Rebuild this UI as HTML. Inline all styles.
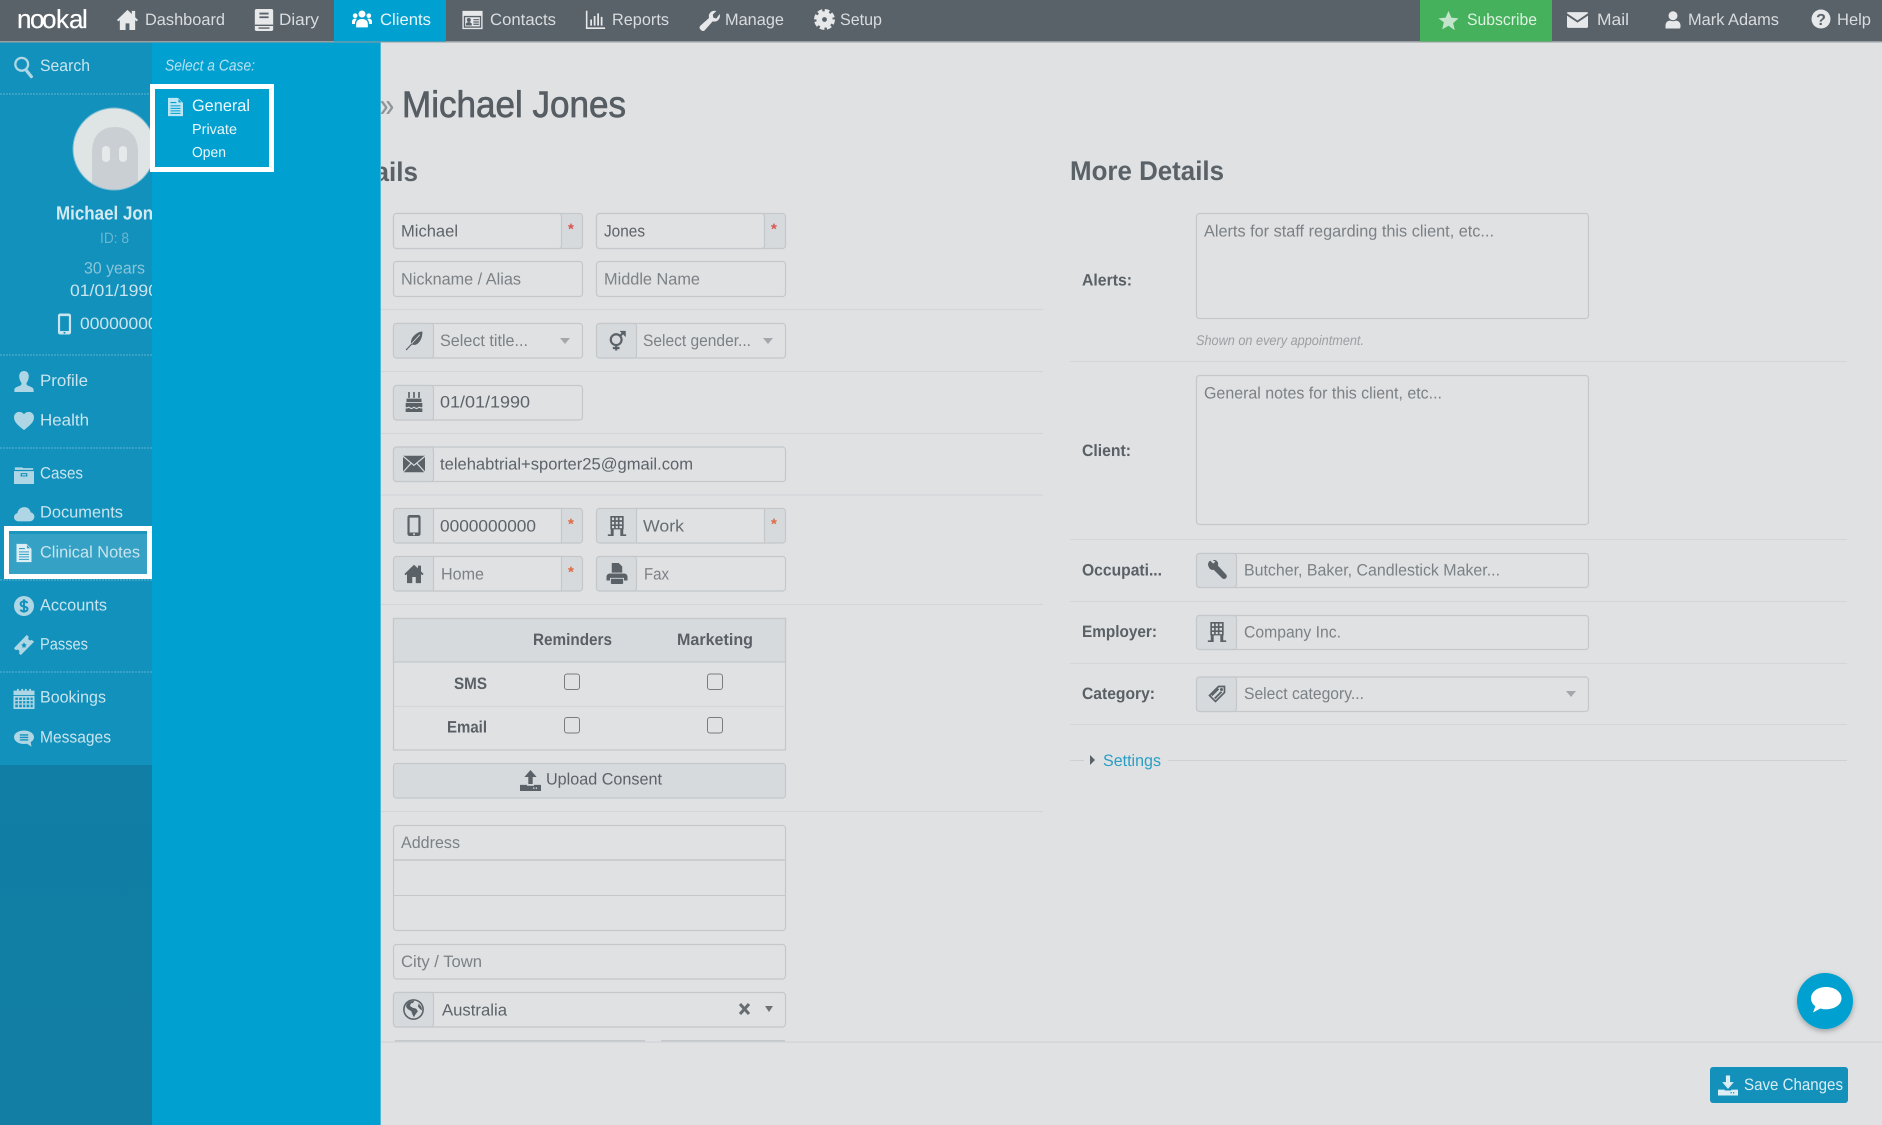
<!DOCTYPE html>
<html lang="en"><head><meta charset="utf-8"><title>Michael Jones</title>
<style>
html,body{margin:0;padding:0;width:1882px;height:1125px;overflow:hidden;background:#dfe1e3}
svg{display:block}
text{font-family:"Liberation Sans",sans-serif;font-size:16.5px;fill:#5d6368}
text{text-rendering:geometricPrecision}
.n{fill:#d9dcdf;font-size:16.5px}
.s{fill:#c9e4ee;font-size:16.5px}
.p{fill:#7c8185}
.b{font-weight:bold;fill:#5a6065}
.f{fill:#dfe1e3;stroke:#c4c8cb;stroke-width:1.2}
.a{fill:#d6dadd;stroke:#c4c8cb;stroke-width:1.2}
.h{stroke:#d4d7da;stroke-width:1.2}
.d{stroke:#5fb3d0;stroke-width:1;stroke-dasharray:2 1}
.r{fill:#d9534f;font-size:15px;font-weight:bold}
.ar{fill:#a4a8ac}
use.g{color:#5a6267;--b:#d6dadd}
use.w{color:#e6e8ea;--b:#5a6269}
use.m{color:#aed6e5;--b:#1191bb}
</style></head>
<body>
<svg width="1882" height="1125" viewBox="0 0 1882 1125" xmlns="http://www.w3.org/2000/svg">
<defs>
<linearGradient id="lo" x1="0" y1="0" x2="0" y2="1"><stop offset="0" stop-color="#107ea5"/><stop offset="1" stop-color="#127ea3"/></linearGradient>
<filter id="sh" x="-30%" y="-30%" width="160%" height="160%"><feDropShadow dx="0" dy="2" stdDeviation="3" flood-color="#000" flood-opacity=".3"/></filter>
<clipPath id="av"><circle cx="114" cy="149" r="40.500"/></clipPath>
<symbol id="i-home" viewBox="0 0 24 24"><path fill="currentColor" d="M12 2 1 12.500 2.500 14 4 12.700V23h6v-7h4v7h6V12.700l1.500 1.300 1.500-1.500L20 9.600V3h-3.500v3.200z"/></symbol>
<symbol id="i-book" viewBox="0 0 24 24"><path fill="currentColor" d="M4 0h16a2 2 0 0 1 2 2v20a2 2 0 0 1-2 2H4a2 2 0 0 1-2-2V2a2 2 0 0 1 2-2z"/><path fill="var(--b)" d="M7 4h10v2H7zM7 8h10v2H7zM2 17h20v1.500H2zM6 20h12v1.500H6z"/></symbol>
<symbol id="i-people" viewBox="0 0 24 24"><g fill="currentColor"><circle cx="12" cy="6" r="4.200"/><path d="M5 22v-4c0-4 3-6 7-6s7 2 7 6v4z"/><circle cx="3.800" cy="8" r="2.800"/><circle cx="20.200" cy="8" r="2.800"/><path d="M0 18v-3c0-2 1.500-3.500 3.800-3.500 .8 0 1.500.2 2 .5C4.500 13 3.500 15 3.500 18zM24 18v-3c0-2-1.500-3.500-3.800-3.500-.8 0-1.500.2-2 .5 1.300 1 2.300 3 2.300 6z"/></g></symbol>
<symbol id="i-card" viewBox="0 0 24 24"><path fill="currentColor" d="M1 2h22v20H1z"/><path fill="var(--b)" d="M2.500 7.500h19v13h-19z"/><path fill="currentColor" d="M4 4h16v2H4z"/><path fill="currentColor" d="M4 9h16v10H4z"/><circle fill="var(--b)" cx="8" cy="12" r="2.200"/><path fill="var(--b)" d="M4.800 18v-1.500c0-1.300 1.500-2.200 3.200-2.200s3.200.9 3.200 2.200V18zM13 11h6v1.300h-6zM13 13.500h6v1.300h-6zM13 16h6v1.300h-6z"/></symbol>
<symbol id="i-chart" viewBox="0 0 24 24"><path fill="currentColor" d="M1 2h1.800v19H23v1.800H1zM6 12h2v7H6zM10 8h2v11h-2zM14 5h2v14h-2zM18 9h2v10h-2z"/></symbol>
<symbol id="i-wrench" viewBox="0 0 24 24"><path fill="currentColor" d="M22.500 5.500c.8 2.300.2 4.800-1.500 6.500-1.700 1.600-4 2.100-6.100 1.500L6.300 23.200c-1 1.100-2.700 1.100-3.700.1l-1.300-1.200c-1-1-1-2.600 0-3.700l9.700-8.700C10.300 7.600 10.900 5.300 12.500 3.700 14.200 2 16.700 1.500 18.900 2.200L15 6.200l.7 3.300 3.200.8z"/></symbol>
<symbol id="i-wr2" viewBox="0 0 24 24"><path fill="currentColor" d="M1.500 7C.8 4.500 1.800 2 3.800.8L7.500 4.300 10 2 6.600.2C9-.6 11.500.2 12.700 2.300c.8 1.400.8 3 .3 4.300l9.800 10.600c1.300 1.300 1.300 3.300 0 4.600-1.300 1.300-3.400 1.300-4.700 0L8 11.700C5 12.700 2.400 10 1.500 7z"/></symbol>
<symbol id="i-gear" viewBox="0 0 24 24"><circle cx="12" cy="12" r="6" fill="none" stroke="currentColor" stroke-width="6.500"/><circle cx="12" cy="12" r="10" fill="none" stroke="currentColor" stroke-width="4" stroke-dasharray="5.200 2.650"/></symbol>
<symbol id="i-star" viewBox="0 0 24 24"><path fill="currentColor" d="M12 1l3.300 7.700 8.200.8-6.200 5.500 1.900 8.200L12 18l-7.200 4.200 1.900-8.200L.5 9.500l8.200-.8z"/></symbol>
<symbol id="i-mail" viewBox="0 0 24 24"><path fill="currentColor" d="M1 3.500h22a1 1 0 0 1 .8 1.500L12 13 .2 5A1 1 0 0 1 1 3.500zM0 7.500l12 8 12-8V20a1.500 1.500 0 0 1-1.500 1.500h-21A1.500 1.500 0 0 1 0 20z"/></symbol>
<symbol id="i-user" viewBox="0 0 24 24"><circle cx="12" cy="7" r="6" fill="currentColor"/><path fill="currentColor" d="M2 24v-4c0-4 3-6.500 6-6.500 2 1 6 1 8 0 3 0 6 2.500 6 6.500v2a2 2 0 0 1-2 2z"/></symbol>
<symbol id="i-search" viewBox="0 0 24 24"><circle cx="9.500" cy="9" r="7" fill="none" stroke="currentColor" stroke-width="2.500"/><path stroke="currentColor" stroke-width="3.500" stroke-linecap="round" d="M14 15l6 7.500"/></symbol>
<symbol id="i-doc" viewBox="0 0 24 24"><path fill="currentColor" d="M3 1h12l6 6v16H3z"/><path fill="var(--b)" d="M6 6h7v1.300H6zM6 10h12v1.300H6zM6 13h12v1.300H6zM6 16h12v1.300H6zM6 19h12v1.300H6zM15.500 2.500v4h4z"/></symbol>
<symbol id="i-profile" viewBox="0 0 24 24"><path fill="currentColor" d="M12 0c3.200 0 5.500 2.300 5.500 6 0 3-1.400 6-2.600 7.800-.6 1.500.5 2.400 2.500 3.300 3.200 1.300 5.600 1.900 5.600 4.400V24H1v-2.500c0-2.500 2.400-3.100 5.600-4.400 2-.9 3.100-1.800 2.500-3.300C7.900 12 6.500 9 6.500 6c0-3.700 2.300-6 5.500-6z"/></symbol>
<symbol id="i-heart" viewBox="0 0 24 24"><path fill="currentColor" d="M12 23C6 18 0 14 0 7.500 0 3.500 3 1 6.500 1 9 1 11 2.300 12 4c1-1.700 3-3 5.500-3C21 1 24 3.500 24 7.500 24 14 18 18 12 23z"/></symbol>
<symbol id="i-box" viewBox="0 0 24 24"><path fill="currentColor" d="M1 4h9l1 1h12v2H1zM0 8.500h24V24H0z"/><path fill="var(--b)" d="M8 11h8v4H8z"/><path fill="currentColor" d="M9.500 12.200h5v1.600h-5z"/></symbol>
<symbol id="i-cloud" viewBox="0 0 24 24"><path fill="currentColor" d="M5 22a5 5 0 0 1-1-9.900C4.800 7.500 8.300 5 12.500 5c3.800 0 6.800 2.500 7.500 6.100A5.500 5.500 0 0 1 19 22z"/></symbol>
<symbol id="i-dollar" viewBox="0 0 24 24"><circle cx="12" cy="12" r="12" fill="currentColor"/><path fill="none" stroke="var(--b)" stroke-width="2.400" d="M16 8.500c-.8-1.500-2.400-2-4-2-2.200 0-4 1-4 3 0 4.500 8.200 2.300 8.200 6 0 2-1.800 3-4.200 3-1.800 0-3.400-.6-4.300-2.200M12 4v16"/></symbol>
<symbol id="i-ticket" viewBox="0 0 24 24"><path fill="currentColor" d="M15 1l2.300 2.300a2 2 0 0 0 3 3L23 8.500 8.500 23l-2.200-2.200a2 2 0 0 0-3-3L1 15.500z"/><path fill="var(--b)" d="M12 9l1 2 2 .6-1.500 1.500.3 2.100-1.800-1-1.800 1 .3-2.100L9 11.600l2-.6z"/></symbol>
<symbol id="i-cal" viewBox="0 0 24 24"><path fill="currentColor" d="M0 3h4V1h2v2h3V1h2v2h2V1h2v2h3V1h2v2h4v5H0z"/><path fill="currentColor" fill-rule="evenodd" d="M0 9h24v15H0zM2 11v2.500h3V11zM6.500 11v2.500h3V11zM11 11v2.500h2.500V11zM15 11v2.500h3V11zM19.500 11v2.500H22V11zM2 15v2.500h3V15zM6.500 15v2.500h3V15zM11 15v2.500h2.500V15zM15 15v2.500h3V15zM19.500 15v2.500H22V15zM2 19v3h3v-3zM6.500 19v3h3v-3zM11 19v3h2.500v-3zM15 19v3h3v-3zM19.500 19v3H22v-3z"/></symbol>
<symbol id="i-chat" viewBox="0 0 24 24"><path fill="currentColor" d="M12 3c6.600 0 12 3.300 12 8 0 2.500-1.500 4.600-4 6l1 5.500-5.400-3.600c-1.100.2-2.400.3-3.600.3C5.400 19.200 0 15.700 0 11S5.400 3 12 3z"/><path fill="var(--b)" d="M7 7.500h10v1.700H7zM7 10.500h10v1.700H7zM7 13.500h10v1.700H7z"/></symbol>
<symbol id="i-feather" viewBox="0 0 24 24"><path fill="currentColor" d="M22 1c.5 6-2 12-6 15-2 1.500-4.500 1.500-6.500 1L3 24l-1-1 6.500-7c-.5-2 0-5 2-8C14 3.500 18 1.500 22 1z"/><path stroke="var(--b)" stroke-width="1" d="M9 16L19 5"/></symbol>
<symbol id="i-gender" viewBox="0 0 24 24"><path fill="none" stroke="currentColor" stroke-width="2.600" d="M11 17.500a6.500 6.500 0 1 0 0-13 6.500 6.500 0 0 0 0 13zM11 17.500V24M7 21h8M15.500 7L20 1.800"/><path fill="currentColor" d="M15 .5h7.500V8z"/></symbol>
<symbol id="i-cake" viewBox="0 0 24 24"><path fill="currentColor" d="M5 0h2v7H5zM11 0h2v7h-2zM17 0h2v7h-2zM3 8h18v4H3zM2 13h20v5c-1.500 1-2.500-.5-3.500-.5-1.500 0-2 1.500-3.500 1.500s-2-1.500-3-1.500-1.500 1.500-3 1.500-2-1.500-3.500-1.500c-1 0-2 1.500-3.500.5zM2 19.500c1.300.7 2 .3 3.500-.5 1 0 2 1.500 3.500 1.500S11 19 12 19s1.500 1.500 3 1.500 2-1.500 3.500-1.500c1.500.8 2.200 1.200 3.500.5V24H2z"/></symbol>
<symbol id="i-env" viewBox="0 0 24 24"><path fill="currentColor" d="M0 3h24v18H0z"/><path fill="none" stroke="var(--b)" stroke-width="1.300" d="M0 3.500l12 10 12-10M0 21l9-10M24 21l-9-10"/></symbol>
<symbol id="i-phone" viewBox="0 0 24 24"><path fill="currentColor" fill-rule="evenodd" d="M7 0h10a2.500 2.500 0 0 1 2.500 2.500v19A2.500 2.500 0 0 1 17 24H7a2.500 2.500 0 0 1-2.500-2.500v-19A2.500 2.500 0 0 1 7 0zM7 3v17h10V3zM11 21v2h2v-2z"/></symbol>
<symbol id="i-bld" viewBox="0 0 24 24"><path fill="currentColor" fill-rule="evenodd" d="M4 0h16v16h-.5v6H23v2h-7v-8H8v8H1v-2h3.500v-6H4zM6 2v3h2.500V2zM10.500 2v3H13V2zM15 2v3h3V2zM6 7v3h2.500V7zM10.500 7v3H13V7zM15 7v3h3V7zM6 12v2.500h2.500V12zM10.500 12v2.500H13V12zM15 12v2.500h3V12z"/></symbol>
<symbol id="i-print" viewBox="0 0 24 24"><path fill="currentColor" d="M6 0h8l4 4v7H6zM4 12h16c2 0 4 1.500 4 3.500V20h-4v-3H4v3H0v-4.500C0 13.500 2 12 4 12zM5 18h14v5c0 .5-.5 1-1 1H6c-.5 0-1-.5-1-1z"/></symbol>
<symbol id="i-globe" viewBox="0 0 24 24"><circle cx="12" cy="12" r="11" fill="none" stroke="currentColor" stroke-width="1.800"/><path fill="currentColor" d="M4 6l3-3 6-1.500-1.500 3L9 5 8 8l3 2 4 1 2 3-3 4-1.500 3-2-4-1-3-4-2.500-2-2.500zM18 5l3 4 1 4-2.500-1.500-2.500-3z"/></symbol>
<symbol id="i-tag" viewBox="0 0 24 24"><path fill="none" stroke="currentColor" stroke-width="2.200" d="M14 2h8v8L10 22 2 14z"/><circle cx="18" cy="6" r="2" fill="currentColor"/><path stroke="currentColor" stroke-width="2.500" d="M5 14L14 5M9 18l9-9"/></symbol>
<symbol id="i-up" viewBox="0 0 24 24"><path fill="currentColor" d="M12 0l7 8h-4.500v8h-5V8H5zM0 17h8v1h8v-1h8v7H0z"/><path fill="var(--b)" d="M15 20h1.500v1.500H15zM18 20h1.500v1.500H18z"/></symbol>
<symbol id="i-down" viewBox="0 0 24 24"><path fill="currentColor" d="M9.500 0h5v8H19l-7 8-7-8h4.500zM0 17h8v1h8v-1h8v7H0z"/><path fill="var(--b)" d="M15 20h1.500v1.500H15zM18 20h1.500v1.500H18z"/></symbol>
</defs>

<rect width="1882" height="1125" fill="#dfe1e3"/>

<!-- LEFT FORM -->
<text x="253" y="181" textLength="165" lengthAdjust="spacingAndGlyphs" class="b" style="font-size:27px;fill:#5a6167">Client Details</text>
<text x="380" y="116" textLength="14" lengthAdjust="spacingAndGlyphs" style="font-size:32px;fill:#8f9498;stroke:#8f9498;stroke-width:.4">»</text>
<text x="402" y="117" textLength="224" lengthAdjust="spacingAndGlyphs" style="font-size:37px;fill:#565d63;stroke:#565d63;stroke-width:.7">Michael Jones</text>

<!-- row 1 -->
<rect class="a" x="393.500" y="213.500" width="189" height="35" rx="3"/><rect class="f" x="393.500" y="213.500" width="168" height="35" rx="3"/>
<text x="401" y="236.500" textLength="57" lengthAdjust="spacingAndGlyphs">Michael</text><text class="r" x="568" y="234">*</text>
<rect class="a" x="596.500" y="213.500" width="189" height="35" rx="3"/><rect class="f" x="596.500" y="213.500" width="168" height="35" rx="3"/>
<text x="604" y="236.500" textLength="41" lengthAdjust="spacingAndGlyphs">Jones</text><text class="r" x="771" y="234">*</text>
<!-- row 2 -->
<rect class="f" x="393.500" y="261.500" width="189" height="35" rx="3"/><text class="p" x="401" y="284.500" textLength="120" lengthAdjust="spacingAndGlyphs">Nickname / Alias</text>
<rect class="f" x="596.500" y="261.500" width="189" height="35" rx="3"/><text class="p" x="604" y="284.500" textLength="96" lengthAdjust="spacingAndGlyphs">Middle Name</text>
<line class="h" x1="380" x2="1043" y1="309.500" y2="309.500"/>
<!-- selects -->
<rect class="f" x="393.500" y="323.500" width="189" height="34.500" rx="3"/><rect class="a" x="393.500" y="323.500" width="40" height="34.500" rx="3"/>
<use class="g" href="#i-feather" x="404" y="330" width="20" height="21"/>
<text class="p" x="440" y="346" textLength="88" lengthAdjust="spacingAndGlyphs">Select title...</text><path class="ar" d="M560 338h10l-5 6z"/>
<rect class="f" x="596.500" y="323.500" width="189" height="34.500" rx="3"/><rect class="a" x="596.500" y="323.500" width="40" height="34.500" rx="3"/>
<use class="g" href="#i-gender" x="607" y="330" width="20" height="21"/>
<text class="p" x="643" y="346" textLength="108" lengthAdjust="spacingAndGlyphs">Select gender...</text><path class="ar" d="M763 338h10l-5 6z"/>
<line class="h" x1="380" x2="1043" y1="371.500" y2="371.500"/>
<!-- date -->
<rect class="f" x="393.500" y="385.500" width="189" height="34.500" rx="3"/><rect class="a" x="393.500" y="385.500" width="40" height="34.500" rx="3"/>
<use class="g" href="#i-cake" x="404" y="392" width="20" height="20"/>
<text x="440" y="407.500" textLength="90" lengthAdjust="spacingAndGlyphs">01/01/1990</text>
<line class="h" x1="380" x2="1043" y1="433.500" y2="433.500"/>
<!-- email -->
<rect class="f" x="393.500" y="447" width="392" height="34.500" rx="3"/><rect class="a" x="393.500" y="447" width="40" height="34.500" rx="3"/>
<use class="g" href="#i-env" x="403" y="453" width="22" height="22"/>
<text x="440" y="469.500" textLength="253" lengthAdjust="spacingAndGlyphs">telehabtrial+sporter25@gmail.com</text>
<line class="h" x1="380" x2="1043" y1="495" y2="495"/>
<!-- phones -->
<rect class="a" x="393.500" y="508.500" width="189" height="34.500" rx="3"/><rect class="f" x="433.500" y="508.500" width="128" height="34.500"/>
<use class="g" href="#i-phone" x="403" y="515" width="22" height="21"/>
<text x="440" y="531.500" textLength="96" lengthAdjust="spacingAndGlyphs">0000000000</text><text class="r" x="568" y="529" style="fill:#e0683f">*</text>
<rect class="a" x="596.500" y="508.500" width="189" height="34.500" rx="3"/><rect class="f" x="636.500" y="508.500" width="128" height="34.500"/>
<use class="g" href="#i-bld" x="607" y="516" width="20" height="20"/>
<text class="p" x="643" y="531.500" textLength="41" lengthAdjust="spacingAndGlyphs" style="fill:#666c70">Work</text><text class="r" x="771" y="529" style="fill:#e0683f">*</text>
<rect class="a" x="393.500" y="556.500" width="189" height="34.500" rx="3"/><rect class="f" x="433.500" y="556.500" width="128" height="34.500"/>
<use class="g" href="#i-home" x="403" y="563" width="22" height="21"/>
<text class="p" x="441" y="579.500" textLength="43" lengthAdjust="spacingAndGlyphs">Home</text><text class="r" x="568" y="577" style="fill:#e0683f">*</text>
<rect class="f" x="596.500" y="556.500" width="189" height="34.500" rx="3"/><rect class="a" x="596.500" y="556.500" width="40" height="34.500" rx="3"/>
<use class="g" href="#i-print" x="606" y="563" width="22" height="21"/>
<text class="p" x="644" y="579.500" textLength="25" lengthAdjust="spacingAndGlyphs">Fax</text>
<line class="h" x1="380" x2="1043" y1="604.500" y2="604.500"/>
<!-- table -->
<rect class="f" x="393.500" y="618.500" width="392" height="131.500"/>
<rect class="a" x="393.500" y="618.500" width="392" height="43.500"/>
<line class="h" x1="394" x2="785" y1="706.500" y2="706.500"/>
<text class="b" x="533" y="645" textLength="79" lengthAdjust="spacingAndGlyphs">Reminders</text>
<text class="b" x="677" y="645" textLength="76" lengthAdjust="spacingAndGlyphs">Marketing</text>
<text class="b" x="454" y="689" textLength="33" lengthAdjust="spacingAndGlyphs">SMS</text>
<text class="b" x="447" y="732.500" textLength="40" lengthAdjust="spacingAndGlyphs">Email</text>
<rect x="564.500" y="674" width="15" height="15.500" rx="2.500" fill="#dfe1e3" stroke="#787d81" stroke-width="1"/>
<rect x="707.500" y="674" width="15" height="15.500" rx="2.500" fill="#dfe1e3" stroke="#787d81" stroke-width="1"/>
<rect x="564.500" y="717.500" width="15" height="15.500" rx="2.500" fill="#dfe1e3" stroke="#787d81" stroke-width="1"/>
<rect x="707.500" y="717.500" width="15" height="15.500" rx="2.500" fill="#dfe1e3" stroke="#787d81" stroke-width="1"/>
<!-- upload -->
<rect class="a" x="393.500" y="763.500" width="392" height="34.500" rx="3"/>
<use class="g" href="#i-up" x="520" y="770" width="21" height="21"/>
<text x="546" y="784.500" textLength="116" lengthAdjust="spacingAndGlyphs">Upload Consent</text>
<line class="h" x1="380" x2="1043" y1="811.500" y2="811.500"/>
<!-- address -->
<rect class="f" x="393.500" y="825.500" width="392" height="105" rx="3"/>
<line x1="394" x2="785" y1="860" y2="860" stroke="#c4c8cb" stroke-width="1.500"/>
<line x1="394" x2="785" y1="895.500" y2="895.500" stroke="#c4c8cb" stroke-width="1"/>
<text class="p" x="401" y="848" textLength="59" lengthAdjust="spacingAndGlyphs">Address</text>
<rect class="f" x="393.500" y="944.500" width="392" height="34.500" rx="3"/>
<text class="p" x="401" y="967" textLength="81" lengthAdjust="spacingAndGlyphs">City / Town</text>
<rect class="f" x="393.500" y="992.500" width="392" height="34.500" rx="3"/><rect class="a" x="393.500" y="992.500" width="40" height="34.500" rx="3"/>
<use class="g" href="#i-globe" x="403" y="999" width="21" height="21"/>
<text x="442" y="1015.500" textLength="65" lengthAdjust="spacingAndGlyphs">Australia</text>
<path d="M740 1004l9 10M749 1004l-9 10" stroke="#666c70" stroke-width="3"/>
<path d="M765 1006h8l-4 6z" fill="#6d7276"/>
<rect x="395" y="1040" width="250" height="3" fill="#c4c8cb"/><rect x="661" y="1040" width="124" height="3" fill="#c4c8cb"/>

<!-- RIGHT FORM -->
<text class="b" x="1070" y="180" textLength="154" lengthAdjust="spacingAndGlyphs" style="font-size:27px;fill:#5a6167">More Details</text>
<text class="b" x="1082" y="285.500" textLength="50" lengthAdjust="spacingAndGlyphs">Alerts:</text>
<rect class="f" x="1196.500" y="213.500" width="392" height="105" rx="3"/>
<text class="p" x="1204" y="236.500" textLength="290" lengthAdjust="spacingAndGlyphs">Alerts for staff regarding this client, etc...</text>
<text x="1196" y="345" textLength="168" lengthAdjust="spacingAndGlyphs" style="font-size:14px;font-style:italic;fill:#9ca0a3">Shown on every appointment.</text>
<line class="h" x1="1070" x2="1847" y1="361.500" y2="361.500"/>
<text class="b" x="1082" y="456" textLength="49" lengthAdjust="spacingAndGlyphs">Client:</text>
<rect class="f" x="1196.500" y="375.500" width="392" height="149" rx="3"/>
<text class="p" x="1204" y="398.500" textLength="238" lengthAdjust="spacingAndGlyphs">General notes for this client, etc...</text>
<line class="h" x1="1070" x2="1847" y1="539.500" y2="539.500"/>
<text class="b" x="1082" y="575.500" textLength="80" lengthAdjust="spacingAndGlyphs">Occupati...</text>
<rect class="f" x="1196.500" y="553.500" width="392" height="34" rx="3"/><rect class="a" x="1196.500" y="553.500" width="40" height="34" rx="3"/>
<use class="g" href="#i-wr2" x="1207" y="560" width="20" height="20"/>
<text class="p" x="1244" y="575.500" textLength="256" lengthAdjust="spacingAndGlyphs">Butcher, Baker, Candlestick Maker...</text>
<line class="h" x1="1070" x2="1847" y1="601.500" y2="601.500"/>
<text class="b" x="1082" y="637" textLength="75" lengthAdjust="spacingAndGlyphs">Employer:</text>
<rect class="f" x="1196.500" y="615.500" width="392" height="34" rx="3"/><rect class="a" x="1196.500" y="615.500" width="40" height="34" rx="3"/>
<use class="g" href="#i-bld" x="1207" y="622" width="20" height="20"/>
<text class="p" x="1244" y="637.500" textLength="97" lengthAdjust="spacingAndGlyphs">Company Inc.</text>
<line class="h" x1="1070" x2="1847" y1="663.500" y2="663.500"/>
<text class="b" x="1082" y="699" textLength="73" lengthAdjust="spacingAndGlyphs">Category:</text>
<rect class="f" x="1196.500" y="677" width="392" height="34.500" rx="3"/><rect class="a" x="1196.500" y="677" width="40" height="34.500" rx="3"/>
<use class="g" href="#i-tag" x="1208" y="685" width="18" height="18"/>
<text class="p" x="1244" y="699" textLength="120" lengthAdjust="spacingAndGlyphs">Select category...</text><path class="ar" d="M1566 691h10l-5 6z"/>
<line class="h" x1="1070" x2="1847" y1="724.500" y2="724.500"/>
<line x1="1070" x2="1084" y1="760.500" y2="760.500" stroke="#cdd1d4"/><line x1="1168" x2="1847" y1="760.500" y2="760.500" stroke="#cdd1d4"/>
<path d="M1090 755l5 5-5 5z" fill="#5a6267"/>
<text x="1103" y="766" textLength="58" lengthAdjust="spacingAndGlyphs" style="fill:#2a9fc5">Settings</text>

<!-- FOOTER -->
<rect x="380" y="1042" width="1502" height="83" fill="#dfe1e3"/>
<line x1="380" x2="1882" y1="1042" y2="1042" stroke="#d0d3d6" stroke-width="1.200"/>
<rect x="1710" y="1067" width="138" height="36" rx="3" fill="#1391bb"/>
<use href="#i-down" x="1718" y="1075" width="20" height="21" style="color:#dcedf4;--b:#1391bb"/>
<text x="1744" y="1090" textLength="99" lengthAdjust="spacingAndGlyphs" style="fill:#d8ecf4">Save Changes</text>
<circle cx="1825" cy="1001" r="28" fill="#00a0d0" filter="url(#sh)"/>
<path fill="#fff" d="M1826 987c9 0 15.500 5 15.500 11.300s-6.500 11-15.500 11c-2 0-4-.3-5.600-.8l-7.400 4 2.400-6.300c-3-2-4.400-4.900-4.400-7.900 0-6.300 6.500-11.300 15-11.300z"/>

<!-- SIDEBAR -->
<rect x="0" y="42" width="152" height="1083" fill="#1191bb"/>
<rect x="0" y="765" width="152" height="360" fill="url(#lo)"/>
<use class="m" href="#i-search" x="13" y="55" width="22" height="24"/>
<text class="s" x="40" y="71" textLength="50" lengthAdjust="spacingAndGlyphs">Search</text>
<line class="d" x1="0" x2="152" y1="94" y2="94"/>
<circle cx="114" cy="149" r="41" fill="#dfe4e4" stroke="#79bcd3" stroke-width="1"/>
<g clip-path="url(#av)"><path d="M92 195v-43c0-16 9-25 23-25s23 9 23 25v43z" fill="#c9cfd3"/></g>
<rect x="102" y="146" width="8" height="16" rx="4" fill="#e6e9e9"/><rect x="119" y="146" width="8" height="16" rx="4" fill="#e6e9e9"/>
<text x="56" y="219.500" textLength="116" lengthAdjust="spacingAndGlyphs" style="font-size:19px;fill:#d3e9f1;font-weight:bold">Michael Jones</text>
<text x="100" y="243" textLength="29" lengthAdjust="spacingAndGlyphs" style="font-size:15px;fill:#6bb6d1">ID: 8</text>
<text x="84" y="273.500" textLength="61" lengthAdjust="spacingAndGlyphs" style="fill:#8ac5da">30 years</text>
<text class="s" x="70" y="296" textLength="88" lengthAdjust="spacingAndGlyphs">01/01/1990</text>
<use href="#i-phone" x="54" y="313" width="21" height="22" style="color:#c9e4ee;--b:#1191bb"/>
<text class="s" x="80" y="329" textLength="97" lengthAdjust="spacingAndGlyphs">0000000000</text>
<line class="d" x1="0" x2="152" y1="355" y2="355"/>
<use class="m" href="#i-profile" x="13" y="371" width="22" height="21"/>
<text class="s" x="40" y="386" textLength="48" lengthAdjust="spacingAndGlyphs">Profile</text>
<use class="m" href="#i-heart" x="13" y="411" width="22" height="20"/>
<text class="s" x="40" y="425.500" textLength="49" lengthAdjust="spacingAndGlyphs">Health</text>
<line class="d" x1="0" x2="152" y1="448" y2="448"/>
<use class="m" href="#i-box" x="13" y="464" width="22" height="20"/>
<text class="s" x="40" y="478.500" textLength="43" lengthAdjust="spacingAndGlyphs">Cases</text>
<use class="m" href="#i-cloud" x="13" y="503" width="22" height="20"/>
<text class="s" x="40" y="517.500" textLength="83" lengthAdjust="spacingAndGlyphs">Documents</text>
<rect x="6.500" y="528.500" width="143" height="48" fill="#35a1c4" stroke="#fff" stroke-width="5"/>
<rect x="9" y="531" width="138" height="3" fill="#1e95bc"/>
<use href="#i-doc" x="13" y="543" width="22" height="20" style="color:#dceef5;--b:#35a1c4"/>
<text class="s" x="40" y="557.500" textLength="100" lengthAdjust="spacingAndGlyphs">Clinical Notes</text>
<line class="d" x1="0" x2="152" y1="580" y2="580"/>
<use class="m" href="#i-dollar" x="14" y="596" width="20" height="20"/>
<text class="s" x="40" y="610.500" textLength="67" lengthAdjust="spacingAndGlyphs">Accounts</text>
<use class="m" href="#i-ticket" x="13" y="634" width="22" height="22"/>
<text class="s" x="40" y="649.500" textLength="48" lengthAdjust="spacingAndGlyphs">Passes</text>
<line class="d" x1="0" x2="152" y1="672" y2="672"/>
<use class="m" href="#i-cal" x="13" y="688" width="22" height="21"/>
<text class="s" x="40" y="702.500" textLength="66" lengthAdjust="spacingAndGlyphs">Bookings</text>
<use class="m" href="#i-chat" x="13" y="728" width="22" height="20"/>
<text class="s" x="40" y="742.500" textLength="71" lengthAdjust="spacingAndGlyphs">Messages</text>

<!-- CASE PANEL -->
<rect x="152" y="42" width="228" height="1083" fill="#00a0d0"/>
<text x="165" y="70.500" textLength="90" lengthAdjust="spacingAndGlyphs" style="font-size:15.500px;font-style:italic;fill:#b5e0f0">Select a Case:</text>
<rect x="152.500" y="86.500" width="119" height="83" fill="none" stroke="#fff" stroke-width="5"/>
<use href="#i-doc" x="165" y="97" width="21" height="20" style="color:#bde6f4;--b:#00a0d0"/>
<text x="192" y="111" textLength="58" lengthAdjust="spacingAndGlyphs" style="fill:#eaf7fb">General</text>
<text x="192" y="134" textLength="45" lengthAdjust="spacingAndGlyphs" style="font-size:14.500px;fill:#eaf7fb">Private</text>
<text x="192" y="157" textLength="34" lengthAdjust="spacingAndGlyphs" style="font-size:14.500px;fill:#eaf7fb">Open</text>
<rect x="380" y="42" width="1" height="1083" fill="#52b6d6"/>

<!-- TOP NAV -->
<rect width="1882" height="42" fill="#5a6269"/>
<rect y="41" width="1882" height="1.500" fill="#9a9ea1"/>
<rect x="334" width="112" height="41.500" fill="#00a0d0"/>
<rect x="1420" width="132" height="41.500" fill="#46b15c"/>
<text x="17 30 42 56 69 82" y="28" style="font-size:26px;fill:#fff;stroke:#fff;stroke-width:.2">nookal</text>
<use class="w" href="#i-home" x="116" y="8" width="23" height="23"/>
<text class="n" x="145" y="25" textLength="80" lengthAdjust="spacingAndGlyphs">Dashboard</text>
<use class="w" href="#i-book" x="252" y="9" width="24" height="22"/>
<text class="n" x="279" y="25" textLength="40" lengthAdjust="spacingAndGlyphs">Diary</text>
<use href="#i-people" x="349" y="9" width="26" height="20" style="color:#fff"/>
<text x="380" y="25" textLength="51" lengthAdjust="spacingAndGlyphs" style="fill:#e6f5fa">Clients</text>
<use class="w" href="#i-card" x="461" y="9" width="23" height="22"/>
<text class="n" x="490" y="25" textLength="66" lengthAdjust="spacingAndGlyphs">Contacts</text>
<use class="w" href="#i-chart" x="585" y="9" width="21" height="21"/>
<text class="n" x="612" y="25" textLength="57" lengthAdjust="spacingAndGlyphs">Reports</text>
<use class="w" href="#i-wrench" x="699" y="8" width="22" height="24"/>
<text class="n" x="725" y="25" textLength="59" lengthAdjust="spacingAndGlyphs">Manage</text>
<use class="w" href="#i-gear" x="814" y="9" width="21" height="21"/>
<text class="n" x="840" y="25" textLength="42" lengthAdjust="spacingAndGlyphs">Setup</text>
<use href="#i-star" x="1438" y="10" width="21" height="21" style="color:#c2e4ca"/>
<text x="1467" y="25" textLength="70" lengthAdjust="spacingAndGlyphs" style="fill:#dcf1e1">Subscribe</text>
<use class="w" href="#i-mail" x="1567" y="9" width="21" height="21"/>
<text class="n" x="1597" y="25" textLength="32" lengthAdjust="spacingAndGlyphs">Mail</text>
<use class="w" href="#i-user" x="1664" y="9" width="18" height="21"/>
<text class="n" x="1688" y="25" textLength="91" lengthAdjust="spacingAndGlyphs">Mark Adams</text>
<circle cx="1821" cy="19" r="9.500" fill="#e6e8ea"/>
<text x="1821" y="25" text-anchor="middle" style="font-size:16px;font-weight:bold;fill:#5a6269">?</text>
<text class="n" x="1837" y="25" textLength="34" lengthAdjust="spacingAndGlyphs">Help</text>
</svg>
</body></html>
